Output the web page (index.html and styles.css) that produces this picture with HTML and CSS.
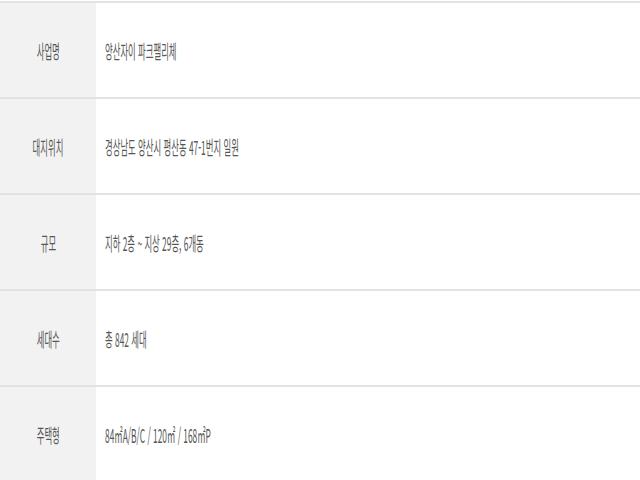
FILE: index.html
```html
<!DOCTYPE html>
<html lang="ko">
<head>
<meta charset="utf-8">
<link rel="stylesheet" href="styles.css">
</head>
<body>
<div class="info">
  <div class="row">
    <div class="label"><span class="txt">사업명</span></div>
    <div class="value"><span class="txt">양산자이 파크팰리체</span></div>
  </div>
  <div class="row">
    <div class="label"><span class="txt">대지위치</span></div>
    <div class="value"><span class="txt">경상남도 양산시 평산동 47-1번지 일원</span></div>
  </div>
  <div class="row">
    <div class="label"><span class="txt">규모</span></div>
    <div class="value"><span class="txt">지하 2층 ~ 지상 29층, 6개동</span></div>
  </div>
  <div class="row">
    <div class="label"><span class="txt">세대수</span></div>
    <div class="value"><span class="txt">총 842 세대</span></div>
  </div>
  <div class="row">
    <div class="label"><span class="txt">주택형</span></div>
    <div class="value"><span class="txt">84㎡A/B/C / 120㎡ / 168㎡P</span></div>
  </div>
</div>
</body>
</html>
```
FILE: styles.css
```css
html, body {
  margin: 0;
  padding: 0;
  background: #ffffff;
}
body {
  font-family: "Noto Sans CJK KR", "Noto Sans", sans-serif;
  color: #555555;
}
.info {
  margin-top: 1px;
}
.row {
  display: grid;
  grid-template-columns: 96px 1fr;
  height: 94px;
  border-top: 2px solid #e2e2e2;
}
.label {
  background: #f2f2f2;
  display: flex;
  align-items: center;
  justify-content: center;
}
.value {
  display: flex;
  align-items: center;
  padding-left: 9px;
}
.txt {
  display: inline-block;
  font-size: 19px;
  line-height: 1;
  white-space: nowrap;
  transform: scaleX(0.44);
}
.label .txt {
  transform-origin: center;
}
.value .txt {
  transform-origin: left center;
}
```
